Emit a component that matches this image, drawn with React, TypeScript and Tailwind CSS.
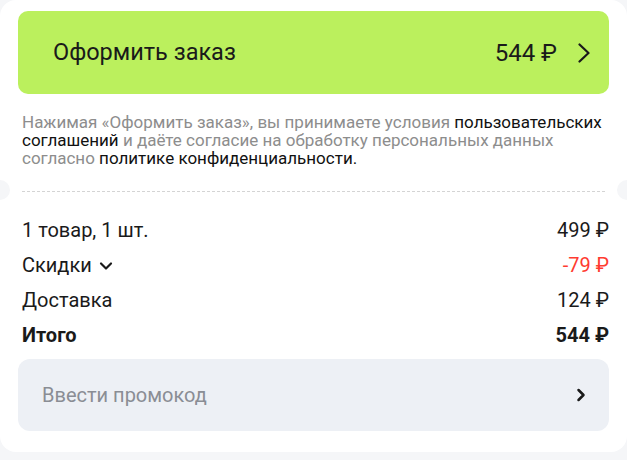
import { ChevronDown, ChevronRight } from "lucide-react";

const rows = [
  { label: "1 товар, 1 шт.", value: "499 ₽" },
];

export default function App() {
  return (
    <div className="min-h-screen bg-[#f5f6f8] font-['Roboto',sans-serif] text-[#1a1a1a]">
      <div className="relative w-[627px] h-[452px] bg-white rounded-2xl overflow-hidden">
        <div className="px-[18px] pt-[11px]">
          <button className="w-full h-[83px] rounded-[10px] bg-[#bbf05d] flex items-center justify-between pl-[35px] pr-[19px]">
            <span className="text-[23.5px]">Оформить заказ</span>
            <span className="flex items-center gap-[21px]">
              <span className="text-[24px]">544 ₽</span>
              <svg width="12" height="20" viewBox="0 0 12 20" fill="none">
                <polyline points="1.5,1.5 10.5,10 1.5,18.5" stroke="#1a1a1a" strokeWidth="2.2" strokeLinecap="round" strokeLinejoin="round" />
              </svg>
            </span>
          </button>
        </div>

        <p className="pl-[22px] pr-[16px] pt-[19px] text-[17px] leading-[18px] text-[#8d8d8d]">
          Нажимая «Оформить заказ», вы принимаете условия{" "}
          <span className="text-[#111]">пользовательских соглашений</span> и даёте согласие на обработку
          персональных данных согласно{" "}
          <span className="text-[#111]">политике конфиденциальности.</span>
        </p>

        <div className="relative mt-[24px] mx-[22px] border-t border-dashed border-[#d4d4d4]" />
        <div className="absolute left-[-10px] top-[180px] w-[20px] h-[20px] rounded-full bg-[#f5f6f8]" />
        <div className="absolute right-[-10px] top-[180px] w-[20px] h-[20px] rounded-full bg-[#f5f6f8]" />

        <div className="pl-[22px] pr-[18px] pt-[28px] flex flex-col gap-[14px] text-[20px] leading-[21px]">
          {rows.map((r) => (
            <div key={r.label} className="flex justify-between">
              <span>{r.label}</span>
              <span>{r.value}</span>
            </div>
          ))}
          <div className="flex justify-between">
            <span className="flex items-center gap-[4px]">
              Скидки <ChevronDown size={20} strokeWidth={2.6} />
            </span>
            <span className="text-[#ff3b30]">-79 ₽</span>
          </div>
          <div className="flex justify-between">
            <span>Доставка</span>
            <span>124 ₽</span>
          </div>
          <div className="flex justify-between font-bold">
            <span>Итого</span>
            <span>544 ₽</span>
          </div>
        </div>

        <div className="px-[18px] pt-[13px]">
          <div className="h-[72px] rounded-xl bg-[#edf0f5] flex items-center justify-between pl-[24px] pr-[18px]">
            <span className="text-[20px] text-[#8a8d94]">Ввести промокод</span>
            <ChevronRight size={20} strokeWidth={3} />
          </div>
        </div>
      </div>
    </div>
  );
}
